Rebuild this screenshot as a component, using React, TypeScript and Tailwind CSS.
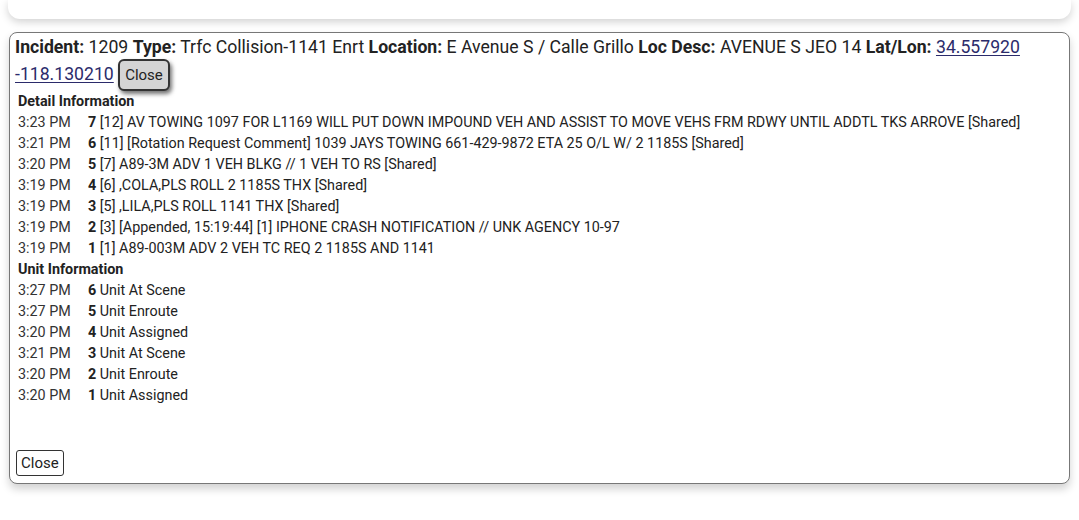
import React from "react";

const details: [string, string, string][] = [
  ["3:23 PM", "7", "[12] AV TOWING 1097 FOR L1169 WILL PUT DOWN IMPOUND VEH AND ASSIST TO MOVE VEHS FRM RDWY UNTIL ADDTL TKS ARROVE [Shared]"],
  ["3:21 PM", "6", "[11] [Rotation Request Comment] 1039 JAYS TOWING 661-429-9872 ETA 25 O/L W/ 2 1185S [Shared]"],
  ["3:20 PM", "5", "[7] A89-3M ADV 1 VEH BLKG // 1 VEH TO RS [Shared]"],
  ["3:19 PM", "4", "[6] ,COLA,PLS ROLL 2 1185S THX [Shared]"],
  ["3:19 PM", "3", "[5] ,LILA,PLS ROLL 1141 THX [Shared]"],
  ["3:19 PM", "2", "[3] [Appended, 15:19:44] [1] IPHONE CRASH NOTIFICATION // UNK AGENCY 10-97"],
  ["3:19 PM", "1", "[1] A89-003M ADV 2 VEH TC REQ 2 1185S AND 1141"],
];

const units: [string, string, string][] = [
  ["3:27 PM", "6", "Unit At Scene"],
  ["3:27 PM", "5", "Unit Enroute"],
  ["3:20 PM", "4", "Unit Assigned"],
  ["3:21 PM", "3", "Unit At Scene"],
  ["3:20 PM", "2", "Unit Enroute"],
  ["3:20 PM", "1", "Unit Assigned"],
];

function Row({ time, num, text }: { time: string; num: string; text: string }) {
  return (
    <div className="flex h-[21px] items-center whitespace-nowrap">
      <span className="w-[70px] shrink-0 text-[#333]">{time}</span>
      <span>
        <b className="font-bold">{num}</b> {text}
      </span>
    </div>
  );
}

export default function App() {
  return (
    <div className="min-h-screen bg-white text-[#222]" style={{ fontFamily: "Roboto, 'Liberation Sans', sans-serif" }}>
      {/* previous card */}
      <div className="mx-[8px] h-[19px] rounded-b-[12px] bg-white shadow-[0_3px_8px_rgba(0,0,0,0.18)]" />

      {/* incident panel */}
      <div className="mx-[9px] mt-[13px] flex h-[452px] flex-col rounded-[8px] border border-[#777] bg-white shadow-[0_5px_8px_rgba(0,0,0,0.18)]">
        <div className="px-[5px] pt-[1px] text-[17.65px] leading-[26px]">
          <b className="font-bold">Incident:</b> 1209 <b className="font-bold">Type:</b> Trfc Collision-1141 Enrt{" "}
          <b className="font-bold">Location:</b> E Avenue S / Calle Grillo <b className="font-bold">Loc Desc:</b> AVENUE S JEO 14{" "}
          <b className="font-bold">Lat/Lon:</b>{" "}
          <a className="text-[#2b2b6b] underline underline-offset-2">34.557920 -118.130210</a>{" "}
          <button className="-mt-[1px] inline-block h-[32px] rounded-[6px] border-2 border-[#333] bg-[#d4d4d4] px-[5px] align-middle text-[15px] leading-none text-[#222] shadow-[2px_3px_4px_rgba(0,0,0,0.55)]">
            Close
          </button>
        </div>

        <div className="px-[8px] text-[14.35px]">
          <div className="flex h-[21px] items-center font-bold">Detail Information</div>
          {details.map(([t, n, x]) => (
            <Row key={n + t} time={t} num={n} text={x} />
          ))}
          <div className="flex h-[21px] items-center font-bold">Unit Information</div>
          {units.map(([t, n, x]) => (
            <Row key={n + t} time={t} num={n} text={x} />
          ))}
        </div>

        <div className="mt-auto px-[6px] pb-[7px]">
          <button className="h-[26px] rounded-[3px] border border-[#333] bg-white px-[4px] text-[15px] leading-none text-[#222]">
            Close
          </button>
        </div>
      </div>
    </div>
  );
}
